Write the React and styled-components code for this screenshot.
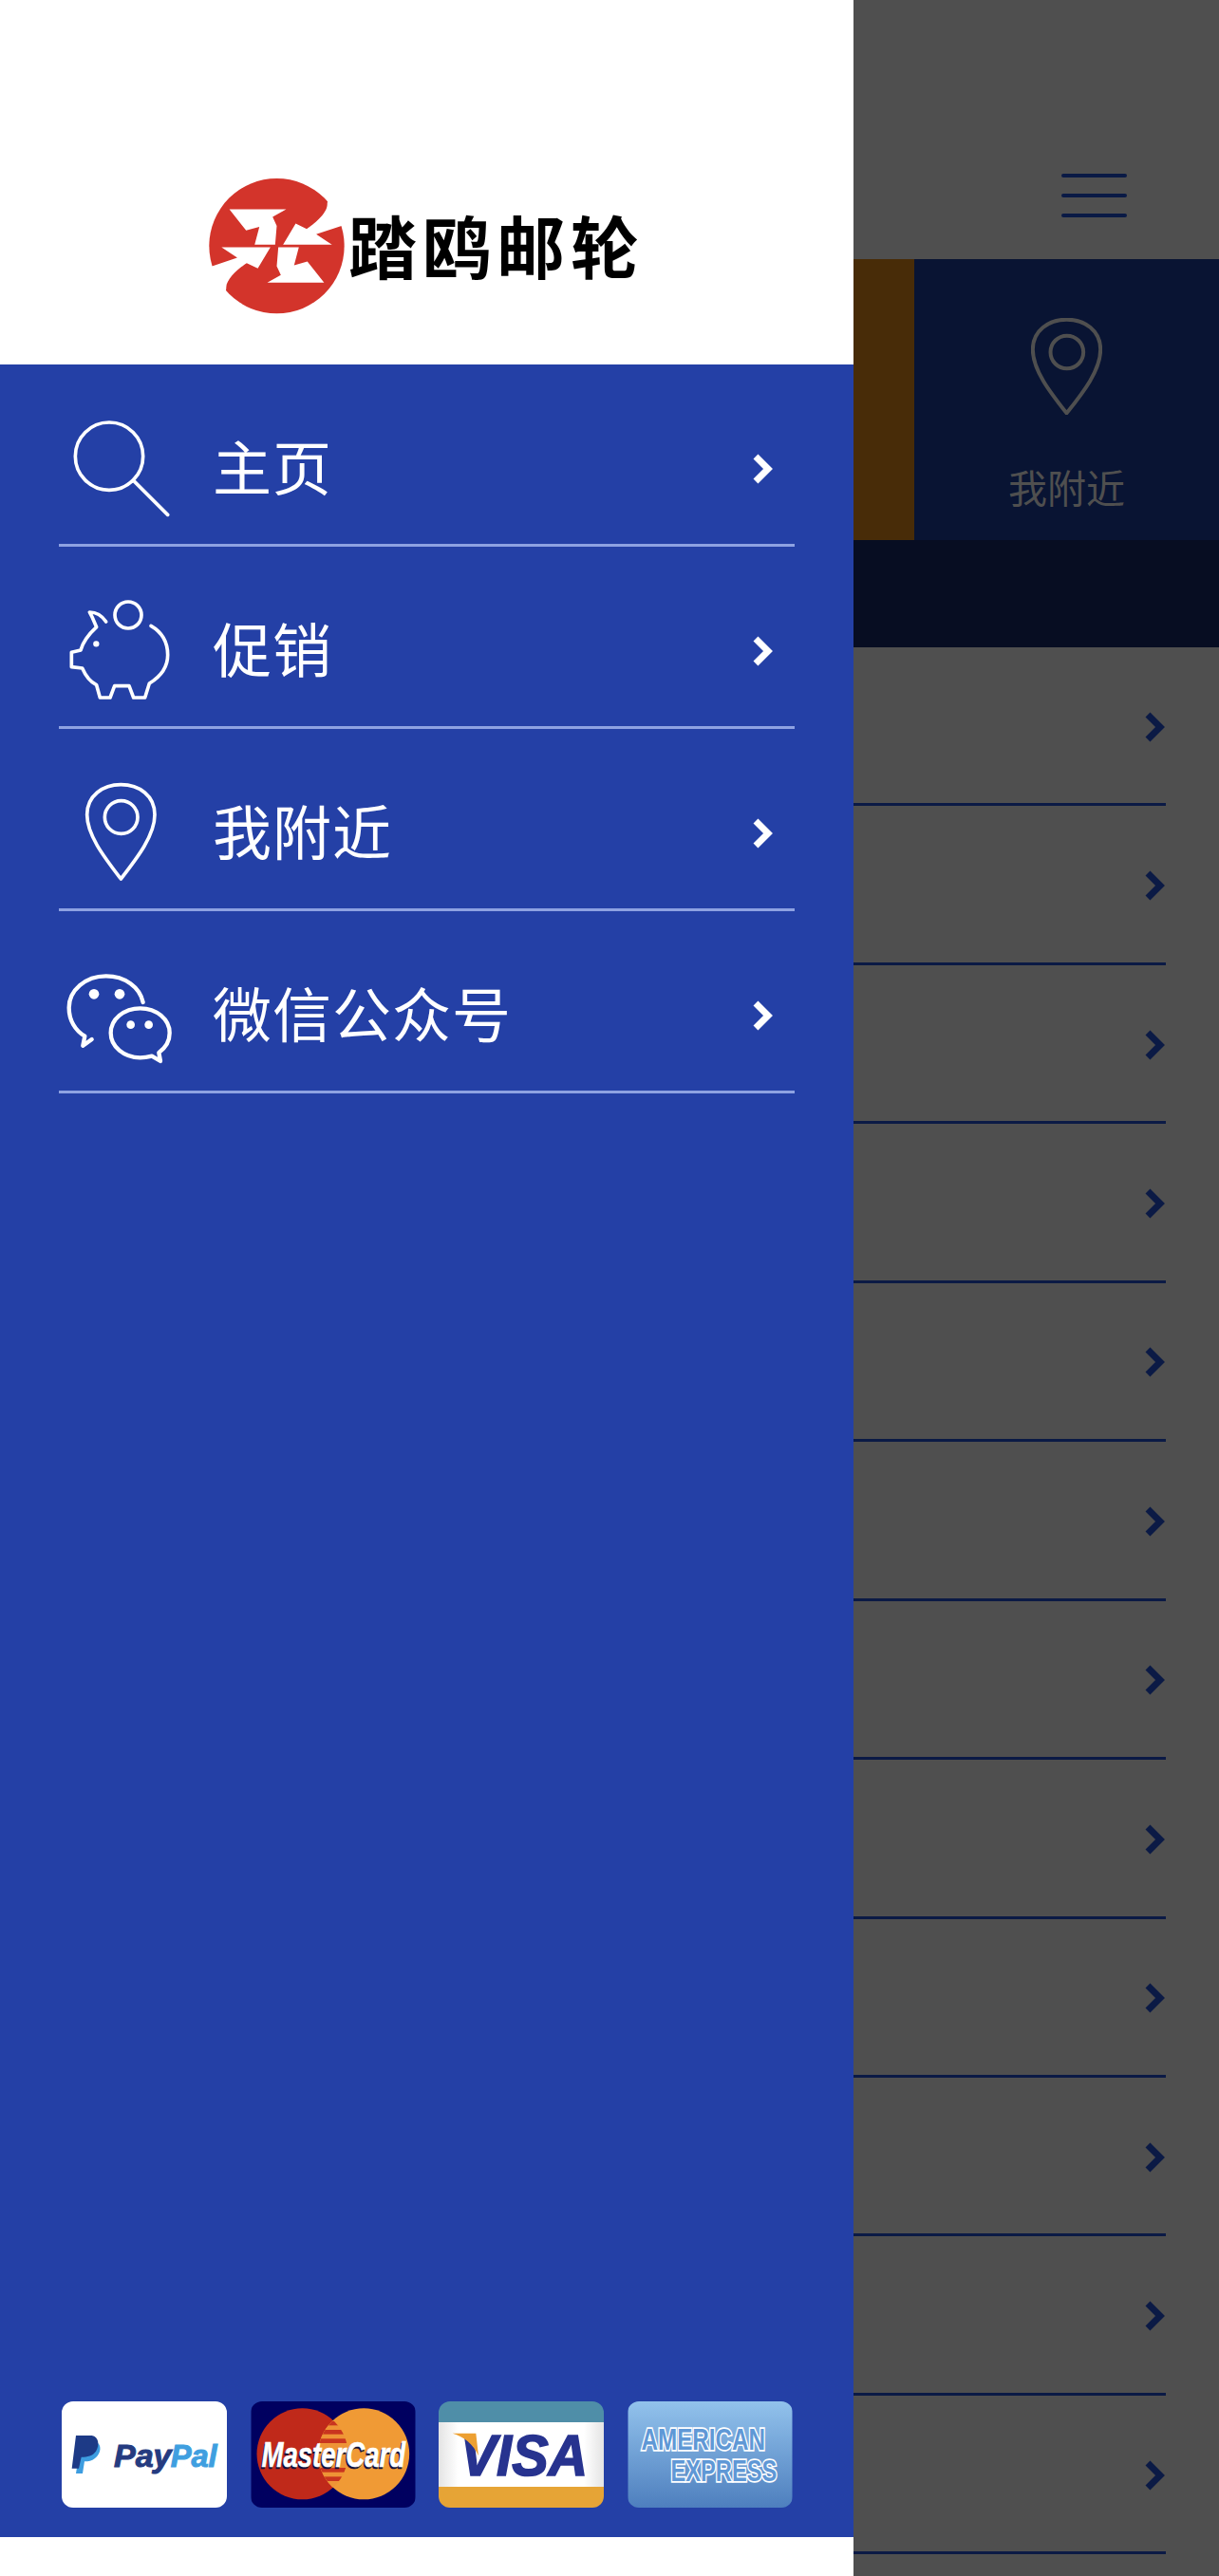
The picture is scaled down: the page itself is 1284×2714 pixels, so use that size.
import React from 'react';
import styled, { createGlobalStyle } from 'styled-components';

const GlobalStyle = createGlobalStyle`
  html, body {
    margin: 0;
    padding: 0;
    background: #fff;
    font-family: "Noto Sans CJK SC", "Liberation Sans", sans-serif;
  }
`;

const Page = styled.div`
  display: flex;
  width: 1284px;
  height: 2714px;
  overflow: hidden;
`;

const Drawer = styled.aside`
  display: flex;
  flex-direction: column;
  flex: 0 0 899px;
  padding-bottom: 41px;
  box-sizing: border-box;
  background: #fff;
`;

const DrawerHeader = styled.header`
  display: flex;
  align-items: center;
  gap: 4px;
  height: 384px;
  padding: 188px 0 53px 220px;
  box-sizing: border-box;
`;

const LogoText = styled.div`
  padding-bottom: 6px;
  font-size: 72px;
  line-height: 1;
  font-weight: 700;
  letter-spacing: 6px;
  color: #000;
`;

const DrawerBody = styled.div`
  display: flex;
  flex-direction: column;
  flex: 1;
  background: #2440a6;
`;

const Menu = styled.nav`
  display: flex;
  flex-direction: column;
  flex: 1;
  padding: 0 62px;
`;

const MenuRow = styled.a`
  display: flex;
  align-items: center;
  height: 192px;
  padding-top: 26px;
  box-sizing: border-box;
  border-bottom: 3px solid #8ea2e2;
`;

const MenuLabel = styled.span`
  flex: 1;
  margin-left: 32px;
  padding-bottom: 4px;
  font-size: 62px;
  line-height: 1;
  letter-spacing: 1px;
  color: #fff;
`;

const MenuChevron = styled.svg`
  width: 24px;
  height: 34px;
  margin: 4px 22px 0 0;
  fill: none;
  stroke: #fff;
  stroke-width: 7;
`;

const MenuIcon = styled.svg`
  flex: 0 0 130px;
  width: 130px;
  height: 130px;
  fill: none;
  stroke: #fff;
  stroke-width: ${(props) => (props.$soft ? 13 : 11)};
  stroke-linecap: round;
  stroke-linejoin: round;
  filter: ${(props) => (props.$soft ? 'blur(0.6px)' : 'none')};
`;

const Payments = styled.div`
  display: flex;
  gap: 24.6px;
  padding: 0 0 31px 65px;
`;

const Card = styled.svg`
  display: block;
  width: 174px;
  height: 112px;
  border-radius: 12px;
`;

const Backdrop = styled.div`
  display: flex;
  flex-direction: column;
  flex: 1;
  background: #4f4f4f;
`;

const TopBar = styled.div`
  display: flex;
  justify-content: flex-end;
  height: 273px;
  padding: 183px 97px 0 0;
  box-sizing: border-box;
`;

const Burger = styled.div`
  display: flex;
  flex-direction: column;
  gap: 17px;
  width: 69px;
`;

const BurgerLine = styled.span`
  display: block;
  height: 4px;
  border-radius: 2px;
  background: #0a1a45;
`;

const Band = styled.div`
  display: flex;
  height: 296px;
`;

const OrangeTab = styled.div`
  flex: 0 0 64px;
  background: #482c08;
`;

const NearbyTab = styled.div`
  display: flex;
  flex: 1;
  flex-direction: column;
  align-items: center;
  padding-top: 62px;
  background: #091433;
`;

const NearbyIcon = styled.svg`
  width: 75px;
  height: 102px;
  fill: none;
  stroke: #4f4f4f;
  stroke-width: 12;
  stroke-linejoin: round;
`;

const NearbyLabel = styled.span`
  margin-top: 55px;
  font-size: 41px;
  line-height: 1;
  color: #4f4f4f;
`;

const DarkStrip = styled.div`
  height: 113px;
  background: #070d22;
`;

const ListRow = styled.div`
  display: flex;
  align-items: center;
  justify-content: flex-end;
  height: 167.45px;
  margin-right: 56px;
  padding-top: 3px;
  box-sizing: border-box;
  border-bottom: 3px solid #0b1a45;
`;

const ListChevron = styled.svg`
  width: 22px;
  height: 34px;
  fill: none;
  stroke: #0b1a45;
  stroke-width: 7;
`;

const menuIcons = {
  search: (
    <MenuIcon viewBox="66 21 390 390">
      <circle cx="225" cy="182" r="107" />
      <path d="M305 262 L410 367" />
    </MenuIcon>
  ),
  piggy: (
    <MenuIcon viewBox="66 597 390 390">
      <circle cx="285" cy="684" r="42" />
      <path d="M357 718 C395 740 410 775 410 810 C410 850 385 880 352 900 L338 945 L302 945 L288 908 L242 908 L228 945 L196 945 L185 905 C165 895 150 875 140 852 L106 848 L106 802 L135 795 C142 770 160 745 185 722 L172 692 L163 675 C190 675 205 690 215 705" />
      <circle cx="184" cy="775" r="4" fill="#fff" />
    </MenuIcon>
  ),
  pin: (
    <MenuIcon viewBox="66 93 390 390">
      <path d="M262 438 C210 370 155 300 155 235 C155 175 205 140 262 140 C320 140 369 175 369 235 C369 300 315 370 262 438 Z" />
      <circle cx="263" cy="243" r="52" />
    </MenuIcon>
  ),
  wechat: (
    <MenuIcon viewBox="66 669 390 390" $soft>
      <path d="M170 945 L142 965 L148 935 C118 918 98 885 98 845 C98 790 150 745 215 745 C275 745 322 780 332 828" />
      <path d="M323 847 C375 847 416 882 416 925 C416 950 403 972 382 987 L387 1014 L360 998 C348 1001 336 1003 323 1003 C271 1003 230 968 230 925 C230 882 271 847 323 847 Z" />
      <g fill="#fff" stroke="none">
        <circle cx="177" cy="802" r="16" />
        <circle cx="258" cy="802" r="16" />
        <circle cx="293" cy="899" r="13" />
        <circle cx="350" cy="899" r="13" />
      </g>
    </MenuIcon>
  ),
};

const menuItems = [
  { label: '主页', icon: 'search' },
  { label: '促销', icon: 'piggy' },
  { label: '我附近', icon: 'pin' },
  { label: '微信公众号', icon: 'wechat' },
];

const listRows = [0, 1, 2, 3, 4, 5, 6, 7, 8, 9, 10, 11];

const emblemHalf = (
  <>
    <path d="M185 183 L365 183 L322 207 L335 235 L330 295 L265 295 L280 238 L238 250 Z" />
    <path d="M500 130 L495 165 C497 195 450 232 430 245 L395 228 L355 295 L510 295 L460 262 L540 235 L570 225 L570 130 Z" />
  </>
);

function Emblem() {
  return (
    <svg width="143" height="143" viewBox="120 85 430 430" style={{ flex: 'none' }}>
      <circle cx="335" cy="299" r="214" fill="#d3342b" />
      <g fill="#fff">
        {emblemHalf}
        <g transform="rotate(180 335 299)">{emblemHalf}</g>
      </g>
    </svg>
  );
}

const cardFont = 'Liberation Sans, sans-serif';

function PayPalCard() {
  return (
    <Card viewBox="0 0 522 336">
      <rect width="522" height="336" fill="#fff" />
      <path d="M60 128 L108 128 C128 135 125 165 105 180 C95 188 85 190 72 190 L66 228 L45 228 Z" fill="#3d9de0" />
      <path d="M45 108 L95 108 C118 112 120 140 108 158 C98 172 82 176 62 176 L54 212 L32 212 Z" fill="#1d3a86" />
      <text x="165" y="208" fontFamily={cardFont} fontSize="102" fontWeight="700" fontStyle="italic" fill="#253b80" stroke="#253b80" strokeWidth="3">Pay</text>
      <text x="344" y="208" fontFamily={cardFont} fontSize="98" fontWeight="700" fontStyle="italic" fill="#3f9fe0" stroke="#3f9fe0" strokeWidth="3">Pal</text>
    </Card>
  );
}

function MasterCardCard() {
  return (
    <Card viewBox="0 0 519 336">
      <defs>
        <clipPath id="mc-left">
          <circle cx="162" cy="166" r="144" />
        </clipPath>
        <clipPath id="mc-right">
          <circle cx="356" cy="166" r="144" />
        </clipPath>
      </defs>
      <rect width="519" height="336" fill="#000060" />
      <circle cx="162" cy="166" r="144" fill="#c0291a" />
      <circle cx="356" cy="166" r="144" fill="#f09a35" />
      <g clipPath="url(#mc-left)">
        <g clipPath="url(#mc-right)">
          <rect x="200" y="40" width="120" height="250" fill="#ee9436" />
          <g fill="#c9351f">
            <rect x="200" y="62" width="120" height="14" />
            <rect x="200" y="90" width="120" height="14" />
            <rect x="200" y="118" width="120" height="14" />
            <rect x="200" y="210" width="120" height="14" />
            <rect x="200" y="238" width="120" height="14" />
          </g>
        </g>
      </g>
      <g fontFamily={cardFont} fontSize="108" fontWeight="700" fontStyle="italic">
        <text transform="translate(29 212) scale(0.766 1)" fill="#10103a" stroke="#10103a" strokeWidth="2">MasterCard</text>
        <text transform="translate(33 208) scale(0.766 1)" fill="#fff" stroke="#fff" strokeWidth="2">MasterCard</text>
      </g>
    </Card>
  );
}

function VisaCard() {
  return (
    <Card viewBox="0 0 522 336">
      <defs>
        <linearGradient id="visa-white" x1="0" x2="1" y1="0" y2="0">
          <stop offset="0" stopColor="#e4e4e4" />
          <stop offset="0.12" stopColor="#fff" />
          <stop offset="0.88" stopColor="#fff" />
          <stop offset="1" stopColor="#e4e4e4" />
        </linearGradient>
      </defs>
      <rect width="522" height="66" fill="#4f8ea8" />
      <rect y="66" width="522" height="204" fill="url(#visa-white)" />
      <rect y="270" width="522" height="66" fill="#e6a436" />
      <text transform="translate(68 234) scale(0.93 1)" fontFamily={cardFont} fontSize="186" fontWeight="700" fontStyle="italic" fill="#27338f" stroke="#27338f" strokeWidth="5">VISA</text>
      <path d="M44 101 L118 101 L126 172 C110 135 80 112 44 101 Z" fill="#eda032" />
    </Card>
  );
}

function AmexCard() {
  const amexText = {
    fontFamily: cardFont,
    fontSize: 96,
    fontWeight: 700,
    fill: '#5f98d6',
    stroke: '#fff',
    strokeWidth: 10,
    paintOrder: 'stroke',
  };
  return (
    <Card viewBox="0 0 519 336">
      <defs>
        <linearGradient id="amex-bg" x1="0" x2="0" y1="0" y2="1">
          <stop offset="0" stopColor="#92c2ec" />
          <stop offset="1" stopColor="#4e7fbe" />
        </linearGradient>
      </defs>
      <rect width="519" height="336" fill="url(#amex-bg)" />
      <text transform="translate(42 153) scale(0.758 1)" {...amexText}>AMERICAN</text>
      <text transform="translate(135 253) scale(0.74 1)" {...amexText}>EXPRESS</text>
    </Card>
  );
}

export default function App() {
  return (
    <Page>
      <GlobalStyle />
      <Drawer>
        <DrawerHeader>
          <Emblem />
          <LogoText>踏鸥邮轮</LogoText>
        </DrawerHeader>
        <DrawerBody>
          <Menu>
            {menuItems.map((item) => (
              <MenuRow key={item.label}>
                {menuIcons[item.icon]}
                <MenuLabel>{item.label}</MenuLabel>
                <MenuChevron viewBox="0 0 24 34">
                  <path d="M5 4 L18 17 L5 30" />
                </MenuChevron>
              </MenuRow>
            ))}
          </Menu>
          <Payments>
            <PayPalCard />
            <MasterCardCard />
            <VisaCard />
            <AmexCard />
          </Payments>
        </DrawerBody>
      </Drawer>
      <Backdrop>
        <TopBar>
          <Burger>
            <BurgerLine />
            <BurgerLine />
            <BurgerLine />
          </Burger>
        </TopBar>
        <Band>
          <OrangeTab />
          <NearbyTab>
            <NearbyIcon viewBox="150 135 224 306">
              <path d="M262 436 C210 370 155 300 155 235 C155 175 205 140 262 140 C320 140 369 175 369 235 C369 300 315 370 262 436 Z" />
              <circle cx="263" cy="243" r="52" />
            </NearbyIcon>
            <NearbyLabel>我附近</NearbyLabel>
          </NearbyTab>
        </Band>
        <DarkStrip />
        {listRows.map((row) => (
          <ListRow key={row}>
            <ListChevron viewBox="0 0 22 34">
              <path d="M3 4 L16 17 L3 30" />
            </ListChevron>
          </ListRow>
        ))}
      </Backdrop>
    </Page>
  );
}
